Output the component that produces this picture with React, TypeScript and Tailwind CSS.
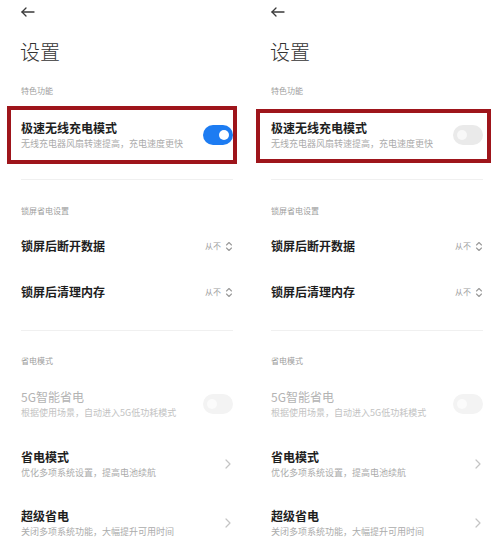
import React from "react";

const font = { fontFamily: '"Noto Sans CJK SC", "Noto Sans", sans-serif' };

function Toggle({ state }: { state: "on" | "off" | "disabled" }) {
  if (state === "on") {
    return (
      <div className="flex h-[20px] w-[30px] shrink-0 items-center justify-end rounded-full bg-[#1d7cf2] pr-[4px]">
        <div className="h-[10px] w-[10px] rounded-full bg-white" />
      </div>
    );
  }
  const bg = state === "off" ? "bg-[#eaeaea]" : "bg-[#f3f3f3]";
  const knob = state === "off" ? "bg-[#f8f8f8]" : "bg-[#fbfbfb]";
  return (
    <div className={`flex h-[20px] w-[30px] shrink-0 items-center justify-start rounded-full pl-[4px] ${bg}`}>
      <div className={`h-[10px] w-[10px] rounded-full ${knob}`} />
    </div>
  );
}

function UpDown() {
  return (
    <svg width="8" height="11" viewBox="0 0 8 11" fill="none" stroke="#9a9a9a" strokeWidth="1.1" strokeLinecap="round" strokeLinejoin="round">
      <path d="M1.5 4L4 1.5L6.5 4" />
      <path d="M1.5 7L4 9.5L6.5 7" />
    </svg>
  );
}

function Chevron() {
  return (
    <svg width="6" height="10" viewBox="0 0 6 10" fill="none" stroke="#c4c4c4" strokeWidth="1.2" strokeLinecap="round" strokeLinejoin="round">
      <path d="M1 1L5 5L1 9" />
    </svg>
  );
}

function Label({ text, mt }: { text: string; mt: string }) {
  return <div className={`${mt} text-[8px] leading-[12px] text-[#9d9d9d]`}>{text}</div>;
}

function Divider({ mt }: { mt: string }) {
  return <div className={`${mt} h-px bg-[#f0f0f0]`} />;
}

function Panel({ on, box }: { on: boolean; box: string }) {
  return (
    <div className="flex w-[250px] flex-col pl-[21px] pr-[17px] bg-white" style={font}>
      <div className="flex h-[24px] items-center">
        <svg width="14" height="10" viewBox="0 0 14 10" fill="none" stroke="#3a3a3a" strokeWidth="1.3" strokeLinecap="round" strokeLinejoin="round">
          <path d="M13 5H1" />
          <path d="M5 1L1 5L5 9" />
        </svg>
      </div>
      <div className="mt-[16px] -ml-[1px] text-[20px] leading-[24px] font-light text-[#333]">设置</div>
      <Label text="特色功能" mt="mt-[21px]" />
      <div className="relative mt-[23px] flex items-center justify-between">
        <div className="flex flex-col">
          <div className="text-[12px] leading-[16px] font-bold text-[#1e1e1e]">极速无线充电模式</div>
          <div className="mt-[2px] text-[9px] leading-[12px] text-[#ababab]">无线充电器风扇转速提高，充电速度更快</div>
        </div>
        <Toggle state={on ? "on" : "off"} />
        <div className={`pointer-events-none absolute border-[4px] border-[#9e151b] ${box}`} />
      </div>
      <Divider mt="mt-[29px]" />
      <Label text="锁屏省电设置" mt="mt-[25px]" />
      <div className="mt-[21px] flex h-[16px] items-center justify-between">
        <div className="text-[12px] leading-[16px] font-bold text-[#1e1e1e]">锁屏后断开数据</div>
        <div className="flex items-center gap-[4px] text-[8px] text-[#a0a0a0]">
          <span>从不</span>
          <UpDown />
        </div>
      </div>
      <div className="mt-[30px] flex h-[16px] items-center justify-between">
        <div className="text-[12px] leading-[16px] font-bold text-[#1e1e1e]">锁屏后清理内存</div>
        <div className="flex items-center gap-[4px] text-[8px] text-[#a0a0a0]">
          <span>从不</span>
          <UpDown />
        </div>
      </div>
      <Divider mt="mt-[30px]" />
      <Label text="省电模式" mt="mt-[24px]" />
      <div className="mt-[22px] flex items-center justify-between">
        <div className="flex flex-col">
          <div className="text-[12px] leading-[16px] text-[#b3b3b3]">5G智能省电</div>
          <div className="mt-[2px] text-[9px] leading-[12px] text-[#c2c2c2]">根据使用场景，自动进入5G低功耗模式</div>
        </div>
        <Toggle state="disabled" />
      </div>
      <div className="mt-[30px] flex items-center justify-between">
        <div className="flex flex-col">
          <div className="text-[12px] leading-[16px] font-bold text-[#1e1e1e]">省电模式</div>
          <div className="mt-[2px] text-[9px] leading-[12px] text-[#ababab]">优化多项系统设置，提高电池续航</div>
        </div>
        <div className="pr-[2px]"><Chevron /></div>
      </div>
      <div className="mt-[29px] flex items-center justify-between">
        <div className="flex flex-col">
          <div className="text-[12px] leading-[16px] font-bold text-[#1e1e1e]">超级省电</div>
          <div className="mt-[2px] text-[9px] leading-[12px] text-[#ababab]">关闭多项系统功能，大幅提升可用时间</div>
        </div>
        <div className="pr-[2px]"><Chevron /></div>
      </div>
    </div>
  );
}

export default function App() {
  return (
    <div className="flex h-[557px] w-[500px] overflow-hidden bg-white">
      <Panel on={true} box="-left-[14px] -right-[4px] -top-[14px] -bottom-[14px]" />
      <Panel on={false} box="-left-[15px] -right-[8px] -top-[11px] -bottom-[13px]" />
    </div>
  );
}
